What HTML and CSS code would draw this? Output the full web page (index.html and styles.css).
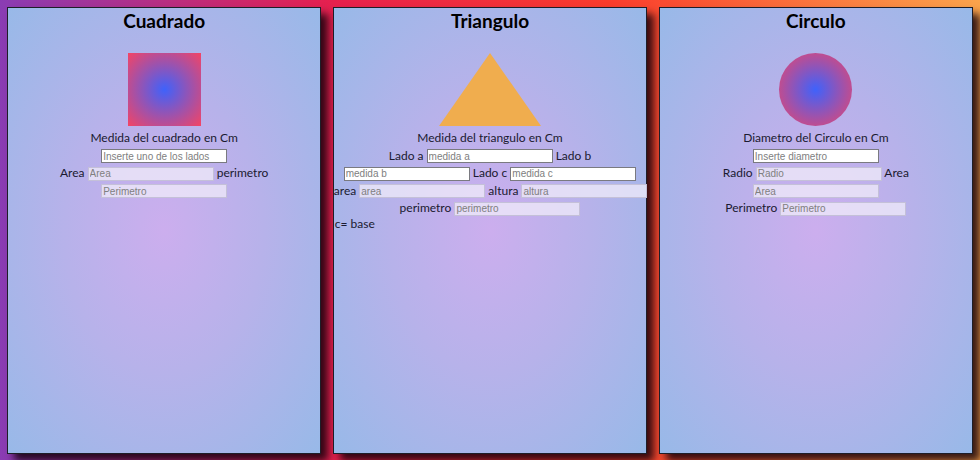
FILE: index.html
```html
<!DOCTYPE html>
<html lang="es">
<head>
<meta charset="utf-8">
<title>Figuras</title>
<link rel="stylesheet" href="styles.css">
</head>
<body>
<main class="board">
  <section class="card">
    <h2 class="title">Cuadrado</h2>
    <div class="shape square"></div>
    <div class="line">Medida del cuadrado en Cm</div>
    <div class="line"><input class="field" type="text" placeholder="Inserte uno de los lados"></div>
    <div class="line">Area <input class="field out" type="text" placeholder="Area" disabled> perimetro</div>
    <div class="line"><input class="field out" type="text" placeholder="Perimetro" disabled></div>
  </section>
  <section class="card">
    <h2 class="title">Triangulo</h2>
    <div class="shape triangle"></div>
    <div class="line">Medida del triangulo en Cm</div>
    <div class="line">Lado a <input class="field" type="text" placeholder="medida a"> Lado b</div>
    <div class="line"><input class="field" type="text" placeholder="medida b"> Lado c <input class="field" type="text" placeholder="medida c"></div>
    <div class="line">area <input class="field out" type="text" placeholder="area" disabled> altura <input class="field out" type="text" placeholder="altura" disabled></div>
    <div class="line">perimetro <input class="field out" type="text" placeholder="perimetro" disabled></div>
    <div class="note">c= base</div>
  </section>
  <section class="card">
    <h2 class="title">Circulo</h2>
    <div class="shape circle"></div>
    <div class="line">Diametro del Circulo en Cm</div>
    <div class="line"><input class="field" type="text" placeholder="Inserte diametro"></div>
    <div class="line">Radio <input class="field out" type="text" placeholder="Radio" disabled> Area</div>
    <div class="line"><input class="field out" type="text" placeholder="Area" disabled></div>
    <div class="line">Perimetro <input class="field out" type="text" placeholder="Perimetro" disabled></div>
  </section>
</main>
</body>
</html>
```

FILE: styles.css
```css
html, body {
  margin: 0;
  height: 100%;
}
body {
  background: linear-gradient(90deg, #8a3cb4 0%, #e6204e 34%, #fa3c2c 62%, #fba44c 100%);
  font-family: Lato, "Noto Sans", sans-serif;
  color: #1a1a30;
  overflow: hidden;
}
.board {
  display: flex;
  gap: 11.5px;
  padding: 7px;
  height: 447px;
}
.card {
  flex: 1;
  min-width: 0;
  border: 1px solid #1e1e28;
  background: radial-gradient(ellipse at center, #ccaeee 0%, #b7b2ea 45%, #98b9e8 100%);
  box-shadow: 7px 7px 8px rgba(20, 0, 10, 0.85);
  text-align: center;
  font-size: 12px;
}
.title {
  margin: 0;
  padding-top: 1px;
  font-size: 19px;
  line-height: 24px;
  font-weight: 700;
  color: #000;
}
.shape {
  margin: 20px auto 3px;
}
.square {
  width: 73px;
  height: 73px;
  background: radial-gradient(#3f62fb 0%, #f44464 100%);
}
.circle {
  width: 73px;
  height: 73px;
  border-radius: 50%;
  background: radial-gradient(ellipse farthest-corner, #3f62fb 0%, #f44464 100%);
}
.triangle {
  width: 0;
  height: 0;
  border-left: 51px solid transparent;
  border-right: 51px solid transparent;
  border-bottom: 73px solid #f0ad4e;
}
.line {
  line-height: 17.5px;
  height: 17.5px;
  white-space: nowrap;
}
.field {
  box-sizing: border-box;
  width: 126px;
  height: 14px;
  margin: 0;
  padding: 0 1px;
  border: 1px solid #7a7a80;
  background: #fff;
  font-family: "Liberation Sans", Arial, sans-serif;
  font-size: 10px;
  vertical-align: middle;
}
.field::placeholder {
  color: #808080;
}
.field.out {
  background: rgba(240, 236, 250, 0.75);
  border-color: #c4c0d8;
}
.note {
  text-align: left;
  line-height: 17.5px;
  padding-left: 1px;
  margin-top: -2px;
}
```
